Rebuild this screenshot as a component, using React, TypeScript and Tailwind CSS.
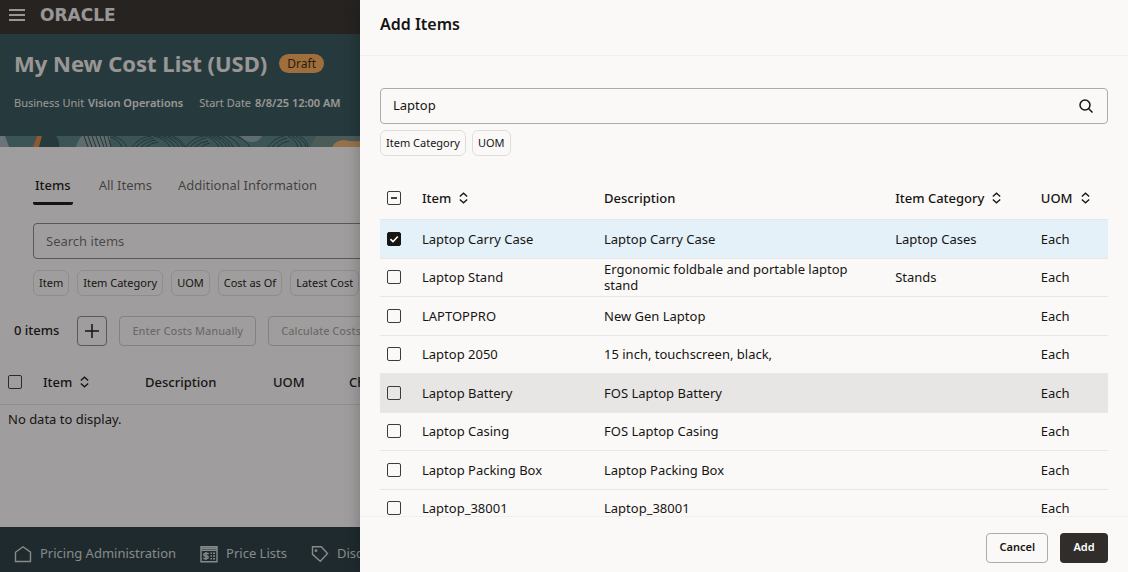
import clsx from "clsx";
import type { ReactNode } from "react";
import { useState } from "react";

type Item = {
	name: string;
	description: string;
	category?: string;
	uom: string;
};

const items: Item[] = [
	{
		name: "Laptop Carry Case",
		description: "Laptop Carry Case",
		category: "Laptop Cases",
		uom: "Each",
	},
	{
		name: "Laptop Stand",
		description: "Ergonomic foldbale and portable laptop stand",
		category: "Stands",
		uom: "Each",
	},
	{ name: "LAPTOPPRO", description: "New Gen Laptop", uom: "Each" },
	{
		name: "Laptop 2050",
		description: "15 inch, touchscreen, black,",
		uom: "Each",
	},
	{ name: "Laptop Battery", description: "FOS Laptop Battery", uom: "Each" },
	{ name: "Laptop Casing", description: "FOS Laptop Casing", uom: "Each" },
	{
		name: "Laptop Packing Box",
		description: "Laptop Packing Box",
		uom: "Each",
	},
	{ name: "Laptop_38001", description: "Laptop_38001", uom: "Each" },
];

const highlighted = "Laptop Battery";

function SortIcon(): ReactNode {
	return (
		<svg
			viewBox="0 0 9 12"
			className="h-3 w-[9px]"
			fill="none"
			stroke="currentColor"
			strokeWidth="1.3"
			aria-hidden="true"
		>
			<path d="M.8 4.6 4.5 1.2l3.7 3.4M.8 7.4l3.7 3.4 3.7-3.4" />
		</svg>
	);
}

function SortButton({ children }: { children: ReactNode }): ReactNode {
	return (
		<button type="button" className="inline-flex items-center gap-2">
			{children}
			<SortIcon />
		</button>
	);
}

function Checkbox({
	label,
	checked = false,
	mixed = false,
	onChange,
}: {
	label: string;
	checked?: boolean;
	mixed?: boolean;
	onChange?: () => void;
}): ReactNode {
	return (
		<span className="relative block size-3.5">
			<input
				type="checkbox"
				aria-label={label}
				checked={checked}
				onChange={() => onChange?.()}
				className="block size-3.5 appearance-none rounded-xs border border-[#3d3a37] checked:border-[#161513] checked:bg-[#161513]"
			/>
			{(checked || mixed) && (
				<svg
					viewBox="0 0 14 14"
					className={clsx(
						"absolute inset-0 pointer-events-none",
						checked ? "text-white" : "text-[#161513]",
					)}
					fill="none"
					stroke="currentColor"
					strokeWidth="1.6"
					aria-hidden="true"
				>
					<path d={checked ? "M3.4 7.2 6 9.7l4.8-5.2" : "M4 7h6"} />
				</svg>
			)}
		</span>
	);
}

function Chip({ children }: { children: ReactNode }): ReactNode {
	return (
		<button
			type="button"
			className="h-[26px] shrink-0 rounded-md border border-[#161513]/12 px-[5px] text-[11px] text-[#161513]"
		>
			{children}
		</button>
	);
}

function Banner(): ReactNode {
	return (
		<div className="shrink-0 overflow-hidden bg-[#548083]">
			<svg
				viewBox="0 0 360 11"
				className="block h-[11px] w-[360px]"
				fill="none"
				aria-hidden="true"
			>
				<path d="M0 0h5l4 11H0z" fill="#a3b3b8" />
				<path d="M37 0h5l-3 11h-6z" fill="#e2873f" />
				<path d="M42 0h14q4 5 3 11H39z" fill="#315357" />
				<path d="M82 0h28v11H76q2-7 6-11z" fill="#8fa5a7" />
				<path d="M240 0h22q-3 6-10 6T240 0z" fill="#8fa9b2" />
				<path d="M316 0h44v11H310z" fill="#6f8a85" />
				<path d="M332 11q4-7 12-7 8 2 16 1v6z" fill="#edb070" />
				<g stroke="#2c4b50" strokeWidth="1">
					<path d="M84 0l4 11M88 0l4 11M92 0l4 11M96 0l4 11M100 0l4 11M104 0l3 11M108 0l3 11" />
					<path d="M110 1q8 2 12 10M113 0q10 3 14 11" />
					<path d="M132 11q7-10 20-11M136 11q7-8 18-9M141 11q6-6 15-7M146 11q5-4 12-5" />
					<path d="M154 0q12 3 16 11M158 0q12 3 17 11M163 0q12 3 16 11M168 0q11 3 15 11M173 0q9 4 12 11" />
					<path d="M186 11q6-9 18-11M190 11q6-7 16-9M195 11q5-5 13-6M201 11q4-3 9-4" />
					<path d="M205 0q10 3 14 11M209 0q10 3 14 11M213 0q10 3 14 11M217 0q9 3 13 11M222 0q8 4 11 11M228 0q8 4 12 11M236 0q10 4 14 11" />
					<path d="M268 11q6-9 16-11M272 11q6-7 15-9M277 11q5-5 12-6" />
					<path d="M288 0q8 4 10 11M292 0q8 4 10 11M296 0q8 4 10 11M300 0q7 4 8 11" />
				</g>
			</svg>
		</div>
	);
}

function CostListPage(): ReactNode {
	return (
		<div className="flex h-full flex-col overflow-hidden whitespace-nowrap">
			<header className="flex h-[34px] shrink-0 items-center gap-3.5 bg-[#312d2a] px-2 pb-1 text-[#f1efed]">
				<button type="button" aria-label="Open navigation menu">
					<svg
						viewBox="0 0 18 14"
						className="w-[18px]"
						stroke="currentColor"
						strokeWidth="2"
						aria-hidden="true"
					>
						<path d="M1 2h16M1 7h16M1 12h16" />
					</svg>
				</button>
				<span className="font-['DejaVu_Sans',sans-serif] text-[17px] leading-none font-bold">
					ORACLE
				</span>
			</header>
			<section className="flex h-[102px] shrink-0 flex-col gap-3.5 bg-[#315357] px-3.5 pt-[11px] text-[#f1efed]">
				<div className="flex items-center gap-3">
					<h1 className="text-[22px] leading-9 font-bold">
						My New Cost List (USD)
					</h1>
					<span className="rounded-full bg-[#fbab59] px-2 text-xs leading-[19px] text-[#3c1f08]">
						Draft
					</span>
				</div>
				<dl className="flex gap-4 text-[11px] leading-4">
					<div className="flex gap-1">
						<dt>Business Unit</dt>
						<dd className="font-semibold">Vision Operations</dd>
					</div>
					<div className="flex gap-1">
						<dt>Start Date</dt>
						<dd className="font-semibold">8/8/25 12:00 AM</dd>
					</div>
				</dl>
			</section>
			<Banner />
			<main className="flex flex-1 flex-col text-[13px]">
				<div className="flex flex-col px-[33px] pt-6">
					<nav className="flex gap-[26px] text-[#161513]/70">
						<a
							href="#items"
							className="h-[34px] rounded-xs border-b-3 border-[#161513] px-0.5 leading-7 font-medium text-[#161513]"
						>
							Items
						</a>
						<a href="#all-items" className="leading-7">
							All Items
						</a>
						<a href="#additional" className="leading-7">
							Additional Information
						</a>
					</nav>
					<input
						type="text"
						aria-label="Search items"
						placeholder="Search items"
						className="mt-[18px] h-9 rounded-sm border border-[#161513]/50 px-3 placeholder:text-[#161513]/65"
					/>
					<div className="mt-[11px] flex gap-2">
						<Chip>Item</Chip>
						<Chip>Item Category</Chip>
						<Chip>UOM</Chip>
						<Chip>Cost as Of</Chip>
						<Chip>Latest Cost</Chip>
					</div>
				</div>
				<div className="mt-5 flex items-center gap-3 px-3.5">
					<span className="mr-1.5 font-medium">0 items</span>
					<button
						type="button"
						aria-label="Add items"
						className="flex size-[30px] items-center justify-center rounded-sm border border-[#161513]/50"
					>
						<svg
							viewBox="0 0 14 14"
							className="size-3.5"
							stroke="currentColor"
							strokeWidth="1.5"
							aria-hidden="true"
						>
							<path d="M7 0v14M0 7h14" />
						</svg>
					</button>
					<button
						type="button"
						disabled
						className="h-[30px] rounded-sm border border-[#161513]/20 px-3 text-[11px] font-medium text-[#161513]/40"
					>
						Enter Costs Manually
					</button>
					<button
						type="button"
						disabled
						className="h-[30px] rounded-sm border border-[#161513]/20 px-3 text-[11px] font-medium text-[#161513]/40"
					>
						Calculate Costs
					</button>
				</div>
				<table className="mt-[15px] w-full table-fixed text-left">
					<thead>
						<tr className="h-[43px] border-b border-[#161513]/10">
							<th className="w-[35px] pl-2">
								<Checkbox label="Select all cost list items" />
							</th>
							<th className="w-[102px] pl-2 font-medium">
								<SortButton>Item</SortButton>
							</th>
							<th className="w-32 pl-2 font-medium">Description</th>
							<th className="w-[76px] pl-2 font-medium">UOM</th>
							<th className="pl-2 font-medium">Charge</th>
						</tr>
					</thead>
					<tbody>
						<tr>
							<td colSpan={5} className="h-[30px] pl-2">
								No data to display.
							</td>
						</tr>
					</tbody>
				</table>
			</main>
			<footer className="flex h-[45px] shrink-0 items-center gap-6 bg-[#233a40] px-3.5 pt-2 text-[13px] text-[#d5d8d8]">
				<a href="#pricing" className="flex items-center gap-2">
					<svg
						viewBox="0 0 18 18"
						className="size-[18px]"
						fill="none"
						stroke="currentColor"
						strokeWidth="1.4"
						aria-hidden="true"
					>
						<path d="M1.5 7.2 9 1.8l7.5 5.4v9.3h-15z" />
					</svg>
					Pricing Administration
				</a>
				<a href="#price-lists" className="flex items-center gap-2">
					<svg
						viewBox="0 0 18 18"
						className="size-[18px]"
						fill="none"
						stroke="currentColor"
						strokeWidth="1.4"
						aria-hidden="true"
					>
						<path d="M1 1.7h16v15.1H1zM1 5.4h16M1 3.5h16" />
						<path d="M10.5 8.2H12M13 8.2h2M10.5 11H12M13 11h2M10.5 13.8H12M13 13.8h2" />
						<path d="M8.7 8.5H5.2c-2 0-2 2.5 0 2.5h1.5c2 0 2 2.5 0 2.5H3.2M6 7v8" />
					</svg>
					Price Lists
				</a>
				<a href="#discounts" className="flex items-center gap-2">
					<svg
						viewBox="0 0 18 18"
						className="size-[18px]"
						fill="none"
						stroke="currentColor"
						strokeWidth="1.4"
						aria-hidden="true"
					>
						<path d="M1.5 1.8h8.8l6.2 6.8-7.2 7.6-7.8-6.8z" />
						<circle cx="5" cy="5.6" r="0.7" fill="currentColor" />
					</svg>
					Discounts
				</a>
			</footer>
		</div>
	);
}

function AddItemsDrawer(): ReactNode {
	const [query, setQuery] = useState("Laptop");
	const [selected, setSelected] = useState<string[]>(["Laptop Carry Case"]);

	const toggle = (name: string) =>
		setSelected((current) =>
			current.includes(name)
				? current.filter((entry) => entry !== name)
				: [...current, name],
		);

	return (
		<aside
			role="dialog"
			aria-labelledby="drawer-title"
			className="absolute inset-y-0 right-0 flex w-3xl max-w-full flex-col bg-[#fbf9f8] shadow-[-2px_0_14px_rgba(0,0,0,0.2)]"
		>
			<header className="flex h-14 shrink-0 items-center border-b border-[#f1efed] px-5 pb-2">
				<h2 id="drawer-title" className="text-base font-semibold">
					Add Items
				</h2>
			</header>
			<div className="flex min-h-0 flex-1 flex-col overflow-hidden px-5 pt-8">
				<div className="flex h-9 shrink-0 items-center rounded-sm border border-[#aeacaa] px-3">
					<input
						type="text"
						aria-label="Search"
						value={query}
						onChange={(event) => setQuery(event.target.value)}
						className="min-w-0 flex-1 text-[13px] outline-none"
					/>
					<button type="button" aria-label="Run search" className="mr-0.5">
						<svg
							viewBox="0 0 14 14"
							className="size-3.5"
							fill="none"
							stroke="currentColor"
							strokeWidth="1.5"
							aria-hidden="true"
						>
							<circle cx="6" cy="6" r="5" />
							<path d="m9.5 9.5 4 4" />
						</svg>
					</button>
				</div>
				<div className="mt-1.5 flex shrink-0 gap-1.5">
					<Chip>Item Category</Chip>
					<Chip>UOM</Chip>
				</div>
				<table className="mt-[21px] w-full table-fixed text-left text-[13px] leading-4">
					<thead>
						<tr className="h-[42px] border-b border-[#e9e7e5]">
							<th className="w-[34px] pl-[7px]">
								<Checkbox label="Select all items" mixed />
							</th>
							<th className="w-1/4 pl-2 font-medium">
								<SortButton>Item</SortButton>
							</th>
							<th className="w-2/5 pl-2 font-medium">Description</th>
							<th className="w-1/5 pl-2 font-medium">
								<SortButton>Item Category</SortButton>
							</th>
							<th className="pl-2 font-medium">
								<SortButton>UOM</SortButton>
							</th>
						</tr>
					</thead>
					<tbody>
						{items.map((item) => (
							<tr
								key={item.name}
								className={clsx(
									"border-b border-[#e9e7e5] odd:h-[39px] even:h-[38px]",
									selected.includes(item.name) && "bg-[#e4f1f9]",
									item.name === highlighted && "bg-[#e8e6e4]",
								)}
							>
								<td className="pl-[7px]">
									<Checkbox
										label={item.name}
										checked={selected.includes(item.name)}
										onChange={() => toggle(item.name)}
									/>
								</td>
								<td className="pl-2">{item.name}</td>
								<td className="pr-6 pl-2">{item.description}</td>
								<td className="pl-2">{item.category}</td>
								<td className="pl-2">{item.uom}</td>
							</tr>
						))}
					</tbody>
				</table>
			</div>
			<footer className="flex h-14 shrink-0 items-center justify-end gap-3 border-t border-[#f1efed] px-5 pt-1.5">
				<button
					type="button"
					className="h-[30px] min-w-12 rounded-sm border border-[#aeacaa] px-3 text-[11px] font-semibold"
				>
					Cancel
				</button>
				<button
					type="button"
					className="h-[30px] min-w-12 rounded-sm bg-[#312d2a] px-3 text-[11px] font-semibold text-white"
				>
					Add
				</button>
			</footer>
		</aside>
	);
}

export default function App(): ReactNode {
	return (
		<div className="relative h-screen overflow-hidden bg-[#fbf9f8] font-['Noto_Sans',sans-serif] text-[#161513]">
			<CostListPage />
			<div className="absolute inset-0 bg-[#161513]/40" />
			<AddItemsDrawer />
		</div>
	);
}
